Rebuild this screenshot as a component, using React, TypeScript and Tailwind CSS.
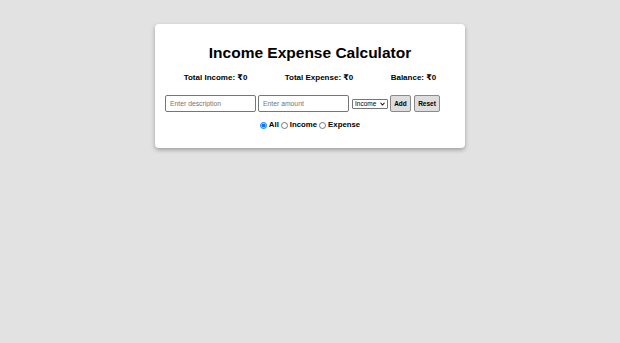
import { useState } from "react"

const font = '"Liberation Sans", Arial, "DejaVu Sans", sans-serif'

export default function App() {
  const [filter, setFilter] = useState("all")
  const [type, setType] = useState("income")

  return (
    <div className="min-h-[343px] w-full bg-[#e2e2e2] pt-[24px]" style={{ fontFamily: font }}>
      <div className="mx-auto w-[310px] rounded-[4px] bg-white px-[10px] pt-[20px] pb-[18px] shadow-[0_2px_4px_rgba(0,0,0,0.3)]">
        <h1 className="text-center text-[15.5px] font-bold leading-[18px] text-black">Income Expense Calculator</h1>

        <div className="mt-[11px] flex justify-around text-[8px] font-bold leading-[10px] text-black">
          <span>Total Income: ₹0</span>
          <span>Total Expense: ₹0</span>
          <span>Balance: ₹0</span>
        </div>

        <div className="mt-[12px] flex items-center">
          <input
            type="text"
            placeholder="Enter description"
            className="h-[17px] w-[91px] rounded-[2px] border border-[#767676] px-[4px] font-[Liberation_Sans] text-[6.8px] outline-none placeholder:text-[#757575]"
          />
          <input
            type="text"
            placeholder="Enter amount"
            className="ml-[2px] h-[17px] w-[91px] rounded-[2px] border border-[#767676] px-[4px] font-[Liberation_Sans] text-[6.8px] outline-none placeholder:text-[#757575]"
          />
          <div className="relative ml-[3px] h-[10px] w-[36px]">
            <select
              value={type}
              onChange={(e) => setType(e.target.value)}
              className="block h-[10px] w-[36px] appearance-none rounded-[1px] border border-[#767676] bg-white py-0 pl-[2px] pr-[8px] font-[Liberation_Sans] text-[6.5px] leading-[8px] text-black outline-none"
            >
              <option value="income">Income</option>
              <option value="expense">Expense</option>
            </select>
            <svg className="pointer-events-none absolute right-[3px] top-[3px]" width="5" height="4" viewBox="0 0 10 8">
              <path d="M1 1.5 L5 6 L9 1.5" fill="none" stroke="#111" strokeWidth="2.2" />
            </svg>
          </div>
          <button className="ml-[2px] h-[17px] w-[21px] rounded-[2px] border border-[#8a8a8a] bg-[#dedede] font-[Liberation_Sans] text-[6.5px] font-bold text-black">
            Add
          </button>
          <button className="ml-[3px] h-[17px] w-[26px] rounded-[2px] border border-[#8a8a8a] bg-[#dedede] font-[Liberation_Sans] text-[6.5px] font-bold text-black">
            Reset
          </button>
        </div>

        <div className="mt-[8px] flex items-center justify-center text-[7.8px] font-bold leading-[10px] text-black">
          {[
            ["all", "All"],
            ["income", "Income"],
            ["expense", "Expense"],
          ].map(([v, label]) => (
            <label key={v} className="flex items-center">
              <input
                type="radio"
                name="filter"
                checked={filter === v}
                onChange={() => setFilter(v)}
                className="m-0 mx-[1px] h-[7px] w-[7px]"
              />
              <span className="ml-[1px] mr-[1px]">{label}</span>
            </label>
          ))}
        </div>
      </div>
    </div>
  )
}
